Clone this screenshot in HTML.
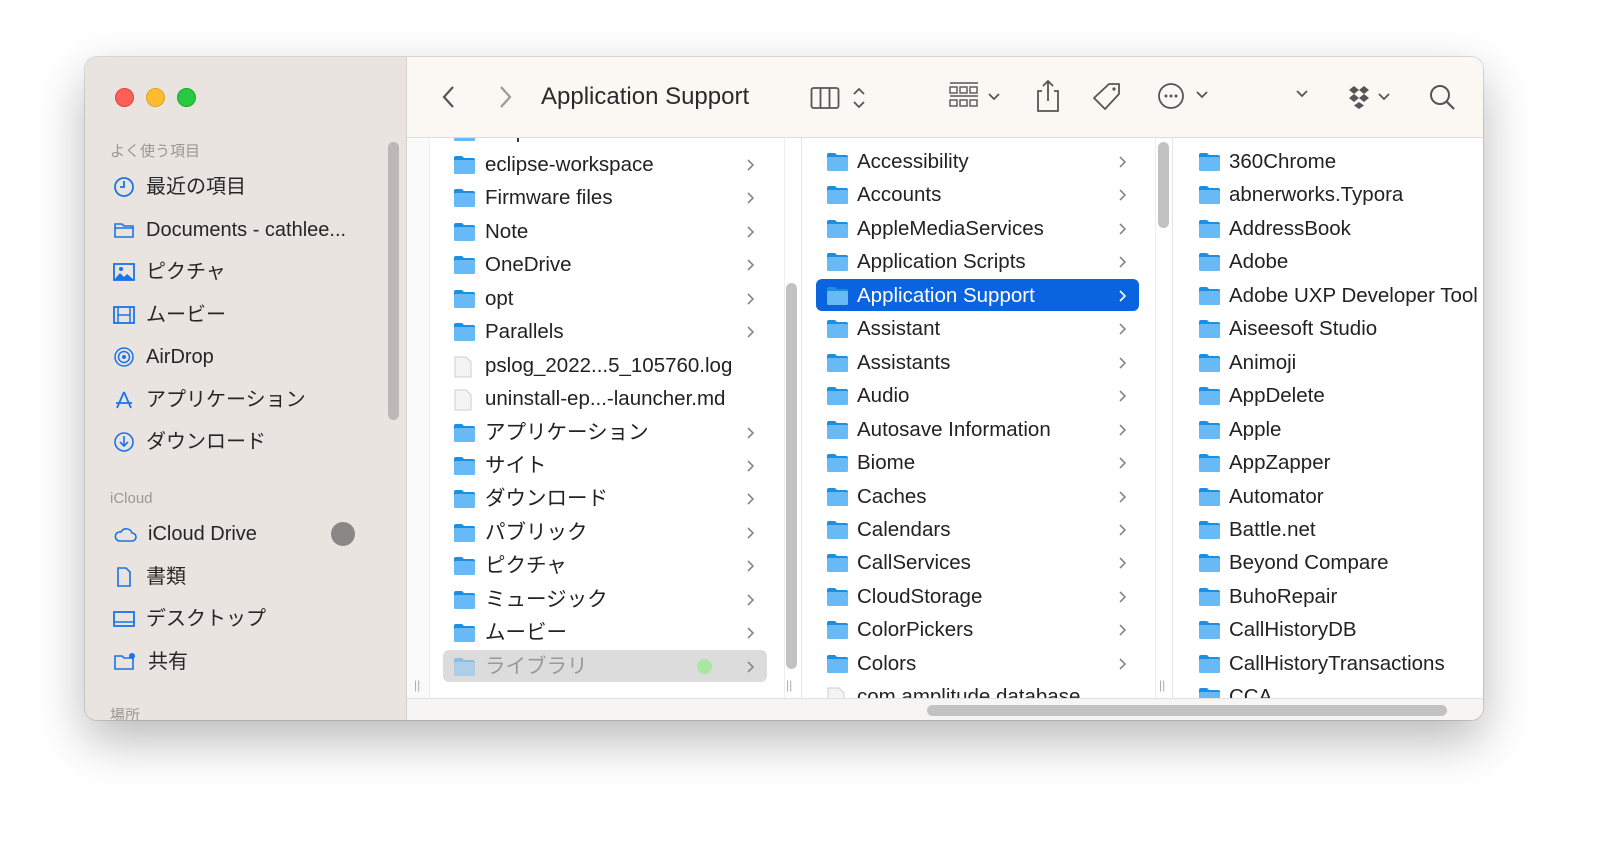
<!DOCTYPE html>
<html><head><meta charset="utf-8"><style>
*{margin:0;padding:0;box-sizing:border-box}
body{width:1600px;height:850px;background:#fff;position:relative;overflow:hidden;font-family:"Liberation Sans","Noto Sans CJK JP",sans-serif;color:#222}
.win{position:absolute;left:85px;top:57px;width:1398px;height:663px;border-radius:12px;overflow:hidden;background:#fff;box-shadow:0 20px 50px rgba(0,0,0,.28),0 0 0 1px rgba(0,0,0,.12)}
.side{position:absolute;left:0;top:0;width:322px;height:663px;background:#e9e4e0;border-right:1px solid #d6d1cd}
.dot{position:absolute;top:31px;width:19px;height:19px;border-radius:50%}
.sh{position:absolute;left:25px;font-size:15px;line-height:18px;color:#9a9794}
.si{position:absolute;left:28px;font-size:20px;line-height:24px;height:24px;color:#262626;display:flex;align-items:center;white-space:nowrap}
.si svg{margin-right:11px;flex:none}
.tb{position:absolute;left:322px;top:0;width:1076px;height:81px;background:#fbf7f3;border-bottom:1px solid #e0dcd8}
.title{position:absolute;left:134px;top:25px;font-size:24px;line-height:30px;color:#2a2a2a}
.col{position:absolute;top:81px;height:560px;overflow:hidden}
.r{position:absolute;height:33px;font-size:20.5px;white-space:nowrap}
.r svg{position:absolute;left:0;top:7px}
.r span{position:absolute;top:5px;line-height:24px}
.hs{position:absolute;left:322px;top:641px;width:1076px;height:22px;background:#f7f5f3;border-top:1px solid #e3e0dd}
</style></head><body>
<div class="win">
<div class="side">
<div class="dot" style="left:30px;background:#fe5f57;border:1px solid #e0443e"></div>
<div class="dot" style="left:61px;background:#febc2e;border:1px solid #dea123"></div>
<div class="dot" style="left:92px;background:#28c840;border:1px solid #1aab29"></div>
<div style="position:absolute;left:303px;top:85px;width:11px;height:278px;background:#bdb8b5;border-radius:6px"></div>
<div class="sh" style="top:86px">よく使う項目</div>
<div class="si" style="top:118px"><svg width="22" height="22" viewBox="0 0 22 22"><circle cx="11" cy="11" r="9" fill="none" stroke="#1a73e8" stroke-width="1.8"/><path d="M11 5v6H7" fill="none" stroke="#1a73e8" stroke-width="1.8"/></svg>最近の項目</div>
<div class="si" style="top:161px"><svg width="22" height="22" viewBox="0 0 22 22"><path d="M2 5h7l2 2h9v11H2z" fill="none" stroke="#1a73e8" stroke-width="1.6"/><path d="M2 9h18" stroke="#1a73e8" stroke-width="1.4"/></svg>Documents - cathlee...</div>
<div class="si" style="top:203px"><svg width="22" height="22" viewBox="0 0 22 22"><rect x="1" y="3" width="20" height="16" fill="none" stroke="#1a73e8" stroke-width="1.8"/><path d="M1 19l6-7 4 4 3-3 7 6z" fill="#1a73e8"/><circle cx="8" cy="8" r="2" fill="#1a73e8"/></svg>ピクチャ</div>
<div class="si" style="top:246px"><svg width="22" height="22" viewBox="0 0 22 22"><rect x="1" y="3" width="20" height="16" fill="none" stroke="#1a73e8" stroke-width="1.8"/><path d="M5 3v16M17 3v16M5 11h12" stroke="#1a73e8" stroke-width="1.5"/></svg>ムービー</div>
<div class="si" style="top:288px"><svg width="22" height="22" viewBox="0 0 22 22"><circle cx="11" cy="11" r="9" fill="none" stroke="#1a73e8" stroke-width="1.5"/><circle cx="11" cy="11" r="5.5" fill="none" stroke="#1a73e8" stroke-width="1.5"/><circle cx="11" cy="11" r="2" fill="#1a73e8"/></svg>AirDrop</div>
<div class="si" style="top:331px"><svg width="22" height="22" viewBox="0 0 22 22"><path d="M11 3L4 19M11 3l7 16M3 14h16" fill="none" stroke="#1a73e8" stroke-width="1.8"/></svg>アプリケーション</div>
<div class="si" style="top:373px"><svg width="22" height="22" viewBox="0 0 22 22"><circle cx="11" cy="11" r="9" fill="none" stroke="#1a73e8" stroke-width="1.6"/><path d="M11 5v10M7 11l4 4 4-4" fill="none" stroke="#1a73e8" stroke-width="1.6"/></svg>ダウンロード</div>
<div class="sh" style="top:433px">iCloud</div>
<div class="si" style="top:465px"><svg width="24" height="22" viewBox="0 0 24 22"><path d="M6 18h13a4 4 0 0 0 0-8 6 6 0 0 0-11-1 4.5 4.5 0 0 0-2 9z" fill="none" stroke="#1a73e8" stroke-width="1.6"/></svg>iCloud Drive</div>
<div style="position:absolute;left:246px;top:465px;width:24px;height:24px;border-radius:50%;background:#8a8786"></div>
<div class="si" style="top:508px"><svg width="22" height="22" viewBox="0 0 22 22"><path d="M5 2h8l4 4v14H5z" fill="none" stroke="#1a73e8" stroke-width="1.6"/></svg>書類</div>
<div class="si" style="top:550px"><svg width="22" height="22" viewBox="0 0 22 22"><rect x="1" y="4" width="20" height="14" fill="none" stroke="#1a73e8" stroke-width="1.8"/><path d="M1 14h20" stroke="#1a73e8" stroke-width="1.5"/></svg>デスクトップ</div>
<div class="si" style="top:593px"><svg width="24" height="22" viewBox="0 0 24 22"><path d="M2 5h7l2 2h9v11H2z" fill="none" stroke="#1a73e8" stroke-width="1.6"/><circle cx="19" cy="5" r="3" fill="#1a73e8"/></svg>共有</div>
<div class="sh" style="top:650px">場所</div>
</div>
<div class="tb">
<svg style="position:absolute;left:34px;top:28px" width="16" height="24"><path d="M12 2L3 12l9 10" fill="none" stroke="#555" stroke-width="2.2"/></svg>
<svg style="position:absolute;left:90px;top:28px" width="16" height="24"><path d="M4 2l9 10-9 10" fill="none" stroke="#999" stroke-width="2.2"/></svg>
<div class="title">Application Support</div>
<svg style="position:absolute;left:403px;top:28px" width="60" height="26"><rect x="1.5" y="3" width="27" height="20" rx="2" fill="none" stroke="#555" stroke-width="1.8"/><path d="M10.5 3v20M19.5 3v20" stroke="#555" stroke-width="1.8"/><path d="M44 9l5-5 5 5M44 17l5 5 5-5" fill="none" stroke="#555" stroke-width="1.8"/></svg>
<svg style="position:absolute;left:541px;top:24px" width="60" height="30"><path d="M2 2h28M2 15h28" stroke="#555" stroke-width="1.6"/><g fill="none" stroke="#555" stroke-width="1.4"><rect x="2" y="6" width="7" height="6"/><rect x="12" y="6" width="7" height="6"/><rect x="22" y="6" width="7" height="6"/><rect x="2" y="19" width="7" height="6"/><rect x="12" y="19" width="7" height="6"/><rect x="22" y="19" width="7" height="6"/></g><path d="M41 13l5 5 5-5" fill="none" stroke="#555" stroke-width="1.8"/></svg>
<svg style="position:absolute;left:628px;top:22px" width="26" height="34"><path d="M7 12H3v20h20V12h-4M13 2v20M8 7l5-5 5 5" fill="none" stroke="#555" stroke-width="1.8"/></svg>
<svg style="position:absolute;left:684px;top:24px" width="32" height="32"><path d="M18 3h10v10L14 28 3 17z" fill="none" stroke="#555" stroke-width="1.8" stroke-linejoin="round"/><circle cx="23" cy="8" r="1.6" fill="#555"/></svg>
<svg style="position:absolute;left:750px;top:24px" width="60" height="30"><circle cx="14" cy="15" r="12" fill="none" stroke="#555" stroke-width="1.8"/><circle cx="9" cy="15" r="1.5" fill="#555"/><circle cx="14" cy="15" r="1.5" fill="#555"/><circle cx="19" cy="15" r="1.5" fill="#555"/><path d="M40 11l5 5 5-5" fill="none" stroke="#555" stroke-width="1.8"/></svg>
<svg style="position:absolute;left:888px;top:30px" width="16" height="14"><path d="M2 4l5 5 5-5" fill="none" stroke="#555" stroke-width="1.8"/></svg>
<svg style="position:absolute;left:940px;top:26px" width="50" height="28"><path d="M7 3l5 4-5 4-5-4zM17 3l5 4-5 4-5-4zM7 11l5 4-5 4-5-4zM17 11l5 4-5 4-5-4zM12 19l5 3.5-5 3.5-5-3.5z" fill="#555"/><path d="M32 11l5 5 5-5" fill="none" stroke="#555" stroke-width="1.8"/></svg>
<svg style="position:absolute;left:1021px;top:26px" width="30" height="30"><circle cx="12" cy="12" r="9" fill="none" stroke="#555" stroke-width="2"/><path d="M18.5 18.5L26 26" stroke="#555" stroke-width="2.2"/></svg>
</div>

<div class="col" style="left:322px;width:395px;border-right:1px solid #e6e6e6">
<div style="position:absolute;left:0;top:0;width:23px;height:560px;border-right:1px solid #eee;background:#fafafa"></div>
<div style="position:absolute;left:377px;top:0;width:17px;height:560px;border-left:1px solid #eee"></div>
<div style="position:absolute;left:379px;top:145px;width:11px;height:386px;background:#c2c2c2;border-radius:6px"></div>
<div style="position:absolute;left:7px;top:540px;color:#aaa;font-size:12px">||</div>
<div style="position:absolute;left:379px;top:540px;color:#aaa;font-size:12px">||</div>
</div>
<div class="col" style="left:718px;width:370px;border-right:1px solid #e6e6e6">
<div style="position:absolute;left:352px;top:0;width:17px;height:560px;border-left:1px solid #eee"></div>
<div style="position:absolute;left:355px;top:4px;width:11px;height:86px;background:#c2c2c2;border-radius:6px"></div>
<div style="position:absolute;left:356px;top:540px;color:#aaa;font-size:12px">||</div>
</div>
<div class="col" style="left:1088px;width:310px"></div>
<div class="hs"><div style="position:absolute;left:520px;top:6px;width:520px;height:11px;background:#c2c2c2;border-radius:6px"></div></div>
<div id="rows"></div>
</div>
<script>
var F='<svg width="23" height="20" viewBox="0 0 23 20"><path d="M1 3a2 2 0 0 1 2-2h6l2 2h9a2 2 0 0 1 2 2v12a2 2 0 0 1-2 2H3a2 2 0 0 1-2-2z" fill="#1c8fe0"/><rect x="1" y="5" width="21" height="14" rx="1.5" fill="#67baf5"/></svg>';
var D='<svg width="20" height="22" viewBox="0 0 20 22"><path d="M2 1h11l5 5v15H2z" fill="#f4f4f4" stroke="#cfcfcf"/></svg>';
var W=document.getElementById('rows'),h='';
function chev(c){return '<svg width="10" height="14" viewBox="0 0 10 14" style="top:10px"><path d="M3 2l5 5-5 5" fill="none" stroke="'+c+'" stroke-width="1.6"/></svg>';}
function col(items,ix,tx,cx,top){items.forEach(function(it,i){var y=top+i*33.45;var name=it[0],t=it[1],sel=it[2];
var st='color:#222';if(t==3)st='color:#999';if(sel){h+='<div style="position:absolute;left:'+(ix-10)+'px;top:'+(y)+'px;width:'+(cx-ix+32)+'px;height:32px;background:'+(sel==1?'#0a63df':'#dcdcdc')+';border-radius:6px"></div>';if(sel==1)st='color:#fff';}
h+='<div class="r" style="left:'+ix+'px;top:'+y+'px;width:'+(cx-ix+20)+'px">'+(t==1?D:F).replace('<svg','<svg style="opacity:'+(t==3?0.4:1)+'"')+'<span style="left:'+(tx-ix)+'px;'+st+'">'+name+'</span>'+(t!=1?chev(sel==1?'#fff':'#888').replace('style="','style="left:'+(cx-ix)+'px;'):'')+'</div>';
if(t==3)h+='<div style="position:absolute;left:'+(cx-48)+'px;top:'+(y+9)+'px;width:15px;height:15px;border-radius:50%;background:#a8e6a2"></div>';});}
col([['eclipse'],['eclipse-workspace'],['Firmware files'],['Note'],['OneDrive'],['opt'],['Parallels'],['pslog_2022...5_105760.log',1],['uninstall-ep...-launcher.md',1],['アプリケーション'],['サイト'],['ダウンロード'],['パブリック'],['ピクチャ'],['ミュージック'],['ムービー'],['ライブラリ',3,2]],368,400,660,57.5);
col([['Accessibility'],['Accounts'],['AppleMediaServices'],['Application Scripts'],['Application Support',0,1],['Assistant'],['Assistants'],['Audio'],['Autosave Information'],['Biome'],['Caches'],['Calendars'],['CallServices'],['CloudStorage'],['ColorPickers'],['Colors'],['com.amplitude.database',1]],741,772,1032,88);
col([['360Chrome'],['abnerworks.Typora'],['AddressBook'],['Adobe'],['Adobe UXP Developer Tool'],['Aiseesoft Studio'],['Animoji'],['AppDelete'],['Apple'],['AppZapper'],['Automator'],['Battle.net'],['Beyond Compare'],['BuhoRepair'],['CallHistoryDB'],['CallHistoryTransactions'],['CCA']],1113,1144,1600,88);
W.innerHTML='<div style="position:absolute;left:322px;top:81px;width:1076px;height:560px;overflow:hidden"><div style="position:absolute;left:-322px;top:-81px;width:1398px;height:700px">'+h+'</div></div>';
</script>
</body></html>
